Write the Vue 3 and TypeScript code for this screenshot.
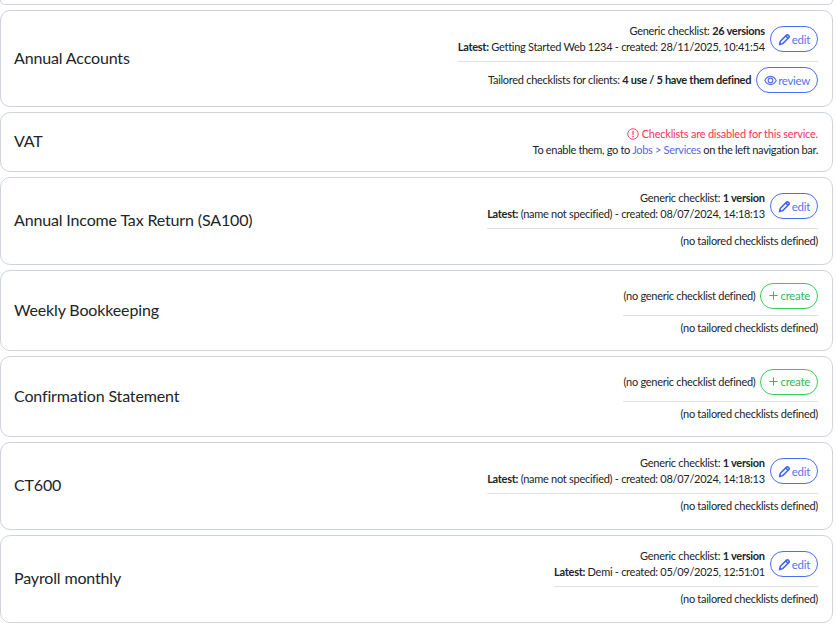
<script setup lang="ts">
interface Service {
  name: string;
  height: number;
  generic?: { label: string; count: string; latest?: string; created?: string };
  tailored?: string;
  disabled?: boolean;
}

const services: Service[] = [
  {
    name: "Annual Accounts",
    height: 96.5,
    generic: { label: "Generic checklist:", count: "26 versions", latest: "Getting Started Web 1234", created: "28/11/2025, 10:41:54" },
    tailored: "4 use / 5 have them defined",
  },
  { name: "VAT", height: 59.5, disabled: true },
  {
    name: "Annual Income Tax Return (SA100)",
    height: 87.5,
    generic: { label: "Generic checklist:", count: "1 version", latest: "(name not specified)", created: "08/07/2024, 14:18:13" },
  },
  { name: "Weekly Bookkeeping", height: 80.5 },
  { name: "Confirmation Statement", height: 80.5 },
  {
    name: "CT600",
    height: 87.5,
    generic: { label: "Generic checklist:", count: "1 version", latest: "(name not specified)", created: "08/07/2024, 14:18:13" },
  },
  {
    name: "Payroll monthly",
    height: 87.5,
    generic: { label: "Generic checklist:", count: "1 version", latest: "Demi", created: "05/09/2025, 12:51:01" },
  },
];
</script>

<template>
  <div class="page">
    <div class="stub"></div>
    <div v-for="s in services" :key="s.name" class="card" :style="{ height: s.height + 'px' }">
      <div class="name">{{ s.name }}</div>

      <div v-if="s.disabled" class="notice">
        <div class="danger">
          <svg class="alert" viewBox="0 0 16 16" fill="none" stroke="currentColor" stroke-width="1.2">
            <circle cx="8" cy="8" r="7" />
            <path d="M8 3.8v5.2M8 10.8v1.4" stroke-width="1.6" />
          </svg>
          Checklists are disabled for this service.
        </div>
        <div class="enable">To enable them, go to <span class="link">Jobs &gt; Services</span> on the left navigation bar.</div>
      </div>

      <div v-else class="details">
        <div class="row">
          <div v-if="s.generic" class="info">
            <div>{{ s.generic.label }} <b>{{ s.generic.count }}</b></div>
            <div><b>Latest:</b> {{ s.generic.latest }} - created: {{ s.generic.created }}</div>
          </div>
          <div v-else class="info">(no generic checklist defined)</div>
          <button v-if="s.generic" class="pill">
            <svg class="icon" viewBox="0 0 16 16" fill="none" stroke="#3f60ee" stroke-width="1.9">
              <path d="M2 14l.9-3.8 7.6-7.6a1.4 1.4 0 0 1 2 0l.9.9a1.4 1.4 0 0 1 0 2l-7.6 7.6z" />
              <path d="M9.6 3.6l2.8 2.8" />
            </svg>edit
          </button>
          <button v-else class="pill green">
            <svg class="icon plus" viewBox="0 0 16 16" fill="none" stroke="currentColor" stroke-width="1.4">
              <path d="M8 2v12M2 8h12" />
            </svg>create
          </button>
        </div>
        <div class="row second" :class="{ tall: s.tailored }">
          <template v-if="s.tailored">
            <div class="info">Tailored checklists for clients: <b>{{ s.tailored }}</b></div>
            <button class="pill">
              <svg class="icon eye" viewBox="0 0 16 16" fill="none" stroke="currentColor" stroke-width="1.5">
                <path d="M1 8s2.6-5 7-5 7 5 7 5-2.6 5-7 5-7-5-7-5z" />
                <circle cx="8" cy="8" r="2.8" />
              </svg>review
            </button>
          </template>
          <div v-else class="info">(no tailored checklists defined)</div>
        </div>
      </div>
    </div>
  </div>
</template>

<style scoped>
.page {
  width: 833px;
  display: flex;
  flex-direction: column;
  gap: 5.5px;
  font-family: Lato, sans-serif;
  color: #212529;
}

.stub {
  height: 4.5px;
  box-sizing: border-box;
  border: 1px solid #ced4da;
  border-top: 0;
  border-radius: 0 0 10px 10px;
}

.card {
  box-sizing: border-box;
  border: 1px solid #ced4da;
  border-radius: 10px;
  background: #fff;
  display: flex;
  align-items: center;
  justify-content: space-between;
  padding: 0 14px 0 13px;
}

.name {
  font-size: 16px;
  line-height: 24px;
  letter-spacing: -0.15px;
  padding-bottom: 1px;
  color: #212529;
}

.details {
  display: flex;
  flex-direction: column;
  font-size: 11px;
  line-height: 16px;
  padding-bottom: 2px;
}

.row {
  display: flex;
  align-items: center;
  justify-content: flex-end;
  gap: 5px;
  padding-bottom: 6px;
}

.row.second {
  border-top: 1px solid #dee2e6;
  padding: 4px 0 0;
}

.row.second.tall {
  padding-top: 5px;
  margin-bottom: -2px;
}

.info {
  text-align: right;
  letter-spacing: -0.28px;
}

b {
  font-weight: 700;
}

.pill {
  box-sizing: border-box;
  height: 26px;
  padding: 0 7px;
  border: 1px solid #4a6ef5;
  border-radius: 13px;
  background: #fff;
  color: #5474f2;
  font-family: inherit;
  font-size: 11.5px;
  display: inline-flex;
  align-items: center;
  gap: 1px;
  letter-spacing: -0.3px;
}

.pill.green {
  border-color: #38cc5a;
  color: #35b565;
}

.icon {
  width: 13px;
  height: 13px;
}

.icon.plus {
  width: 11px;
  height: 11px;
}

.icon.eye {
  width: 13px;
  height: 13px;
}

.notice {
  text-align: right;
  font-size: 11px;
  line-height: 16px;
  letter-spacing: -0.22px;
  padding-top: 1px;
}

.enable {
  letter-spacing: -0.32px;
}

.danger {
  color: #fb3355;
}

.alert {
  width: 12px;
  height: 12px;
  vertical-align: -2px;
}

.link {
  color: #5a66f0;
}
</style>
